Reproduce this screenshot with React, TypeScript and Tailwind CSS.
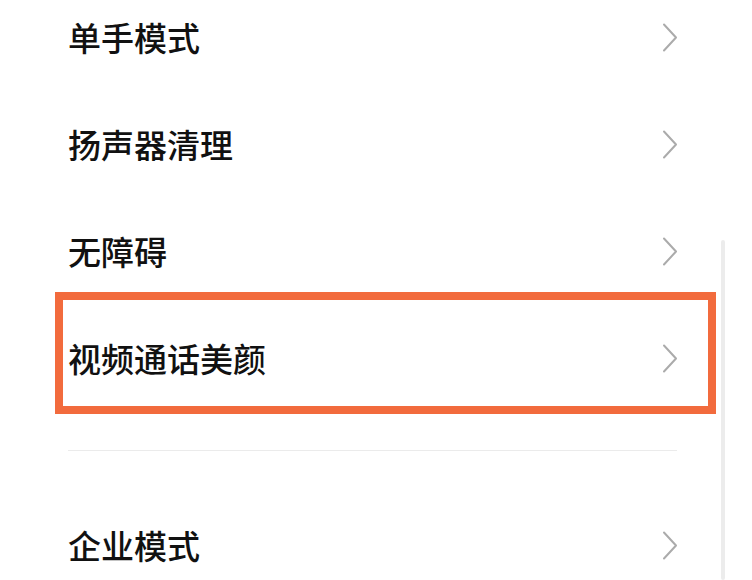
import React from 'react';

interface Item {
  id: string;
  label: string;
}

const groupOne: Item[] = [
  { id: 'one-hand', label: '单手模式' },
  { id: 'speaker', label: '扬声器清理' },
  { id: 'a11y', label: '无障碍' },
  { id: 'beauty', label: '视频通话美颜' },
];

const groupTwo: Item[] = [{ id: 'enterprise', label: '企业模式' }];

function Chevron() {
  return (
    <svg width="16" height="29" viewBox="0 0 16 29" fill="none" className="shrink-0">
      <path d="M2 1.5 L14 14.5 L2 27.5" stroke="#ababab" strokeWidth="2" strokeLinecap="round" strokeLinejoin="round" />
    </svg>
  );
}

function Row({ label }: { label: string }) {
  return (
    <div className="flex h-[107px] items-center justify-between pl-[68px] pr-[74px]">
      <span className="text-[33px] font-medium leading-none text-[#111111]">{label}</span>
      <Chevron />
    </div>
  );
}

export default function App() {
  return (
    <div
      className="relative h-[580px] w-[752px] overflow-hidden bg-white"
      style={{ fontFamily: '"Noto Sans CJK SC", "Noto Sans", sans-serif' }}
    >
      <div className="-mt-[16px] flex flex-col">
        {groupOne.map((item) => (
          <Row key={item.id} label={item.label} />
        ))}

        <div className="ml-[68px] mr-[75px] mt-[38px] mb-[41px] h-px bg-[#ebebeb]" />

        {groupTwo.map((item) => (
          <Row key={item.id} label={item.label} />
        ))}
      </div>

      {/* scrollbar track */}
      <div className="absolute left-[721px] top-[240px] bottom-0 w-[4px] rounded-full bg-[#ececec]" />

      {/* highlight annotation */}
      <div className="pointer-events-none absolute left-[55px] top-[292px] h-[122px] w-[661px] border-[8px] border-[#f26b3d]" />
    </div>
  );
}
